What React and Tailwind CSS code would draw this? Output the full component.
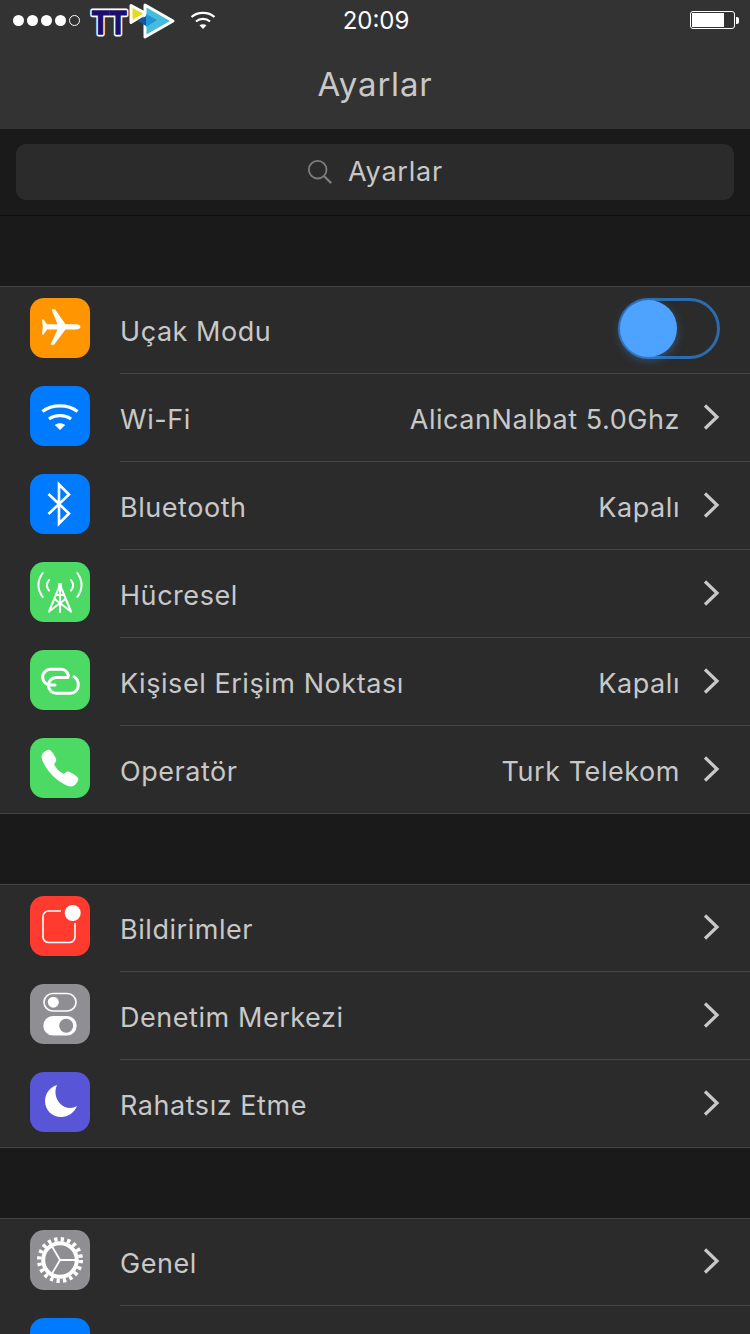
import React from "react";
import { IoCall } from "react-icons/io5";

const Chevron = () => (
  <svg width="18" height="28" viewBox="0 0 18 28" className="shrink-0 mt-[-1px]" fill="none">
    <path d="M3 2.5 L15 14 L3 25.5" stroke="#c8c8c8" strokeWidth="3.2" />
  </svg>
);

const Glyph = ({ children }) => (
  <svg width="60" height="60" viewBox="0 0 60 60" fill="none" stroke="none">
    {children}
  </svg>
);

const PlaneIcon = () => (
  <Glyph>
    <path fill="#fff" d="M50.5 28.8C50.5 27.2 48.5 26.2 46 26.2H35.5L25 11.2H21.5L27.5 26.2H17L13.5 21.5H12L12.8 28.8L12 36.5H13.5L17 31.5H27.5L20.5 46.7H24L35.5 31.5H46C48.5 31.5 50.5 30.4 50.5 28.8Z" />
  </Glyph>
);

const WifiIcon = () => (
  <Glyph>
    <path d="M12.5 25.5C22 18 38 18 47.5 25.5" stroke="#fff" strokeWidth="3.4" />
    <path d="M19 33C25 28.5 35 28.5 41 33" stroke="#fff" strokeWidth="3.4" />
    <path fill="#fff" d="M30 44L24.8 39C28 36.8 32 36.8 35.2 39Z" />
  </Glyph>
);

const BluetoothIcon = () => (
  <Glyph>
    <path d="M18.5 20L39 39.5L29 49.5V10.5L39 20.5L18.5 40" stroke="#fff" strokeWidth="2.6" />
  </Glyph>
);

const TowerIcon = () => (
  <Glyph>
    <g stroke="#fff" strokeWidth="2" strokeLinecap="round">
      <path d="M30 23V50" />
      <path d="M30 23L19 49.5M30 23L41 49.5" />
      <path d="M19 49.5L35.5 37M41 49.5L24.5 37" />
      <path d="M26 33L34 33" />
      <path d="M12.7 11C7 19 7 27 12.7 35M47.3 11C53 19 53 27 47.3 35" />
      <path d="M19 18C16 22 16 25 19 28.5M41 18C44 22 44 25 41 28.5" />
    </g>
    <circle cx="30" cy="23" r="2.2" fill="#fff" />
  </Glyph>
);

const HotspotIcon = () => (
  <Glyph>
    <g stroke="#fff" strokeWidth="3" strokeLinecap="round">
      <path d="M38.5 25.5C37 21.5 34.5 19.3 31 19.3H20.5A7.8 7.8 0 0 0 20.5 35H25" />
      <path d="M38 27.5H26A7.9 7.9 0 0 0 26.7 43.3H40A8 8 0 0 0 48.3 35C48.3 31 46.5 28.2 44 26.8" />
    </g>
  </Glyph>
);

const NoticeIcon = () => (
  <Glyph>
    <path d="M31 15H18.5A5.5 5.5 0 0 0 13 20.5V41A5.5 5.5 0 0 0 18.5 46.5H39.5A5.5 5.5 0 0 0 45 41V27" stroke="#fff" strokeWidth="1.6" />
    <circle cx="42.7" cy="17" r="8" fill="#fff" />
  </Glyph>
);

const ControlIcon = () => (
  <Glyph>
    <rect x="14" y="9.5" width="32" height="17.5" rx="8.75" stroke="#fff" strokeWidth="1.6" />
    <circle cx="23.3" cy="18.2" r="5.5" fill="#fff" />
    <rect x="13.3" y="32" width="33.4" height="19.6" rx="9.8" fill="#fff" />
    <circle cx="36.2" cy="41.8" r="7" fill="#8e8e93" />
  </Glyph>
);

const MoonIcon = () => (
  <Glyph>
    <path fill="#fff" d="M27 13C19.5 15.5 15 22 15 29C15 38 22 45 31 45C38 45 44 41 47 34C42 37 35 36.5 30.5 32C25.5 27 24 19.5 27 13Z" />
  </Glyph>
);

const GearIcon = () => (
  <Glyph>
    <circle cx="30" cy="30" r="20.8" stroke="#fff" strokeWidth="4.4" strokeDasharray="3.3 3.24" />
    <circle cx="30" cy="30" r="16.8" stroke="#fff" strokeWidth="4" />
    <path d="M30 30H47M30 30L21.5 15.5M30 30L21.5 44.5" stroke="#fff" strokeWidth="1.8" />
  </Glyph>
);

const Toggle = () => (
  <div className="flex items-center w-[102px] h-[61px] mt-[-3px] rounded-full border-[3px] border-[#2b6cb0]">
    <div className="w-[57px] h-[57px] ml-[-1px] rounded-full bg-[#4da3ff] shadow-[0_3px_10px_rgba(77,163,255,0.35)]" />
  </div>
);

const Row = ({ bg, icon, label, value, toggle, last }) => (
  <div className={`flex h-[88px] pl-[30px] ${last ? "border-b border-[#444444]" : ""}`}>
    <div className={`w-[60px] h-[60px] mt-3 rounded-[14px] shrink-0 ${bg}`}>{icon}</div>
    <div className={`flex flex-1 items-center ml-[30px] pr-[30px] ${last ? "" : "border-b border-[#444444]"}`}>
      <span className="flex-1 pt-[6px] text-[#c8c8c8]">{label}</span>
      {value && <span className="mr-[22px] pt-[6px] text-[#c8c8c8]">{value}</span>}
      {toggle ? <Toggle /> : <Chevron />}
    </div>
  </div>
);

// top hairline is an inset shadow so rows keep their 88px pitch
const Section = ({ children }) => (
  <div className="bg-[#2b2b2b] shadow-[inset_0_1px_0_#444444]">{children}</div>
);

const Gap = () => <div className="h-[70px]" />;

const CarrierLogo = () => (
  <svg width="90" height="42" viewBox="0 0 90 42" className="ml-[8px] shrink-0">
    <text x="4" y="35" fontFamily="'Liberation Sans', sans-serif" fontWeight="700" fontSize="33" fill="#1c0f6b" stroke="#fff" strokeWidth="5" strokeLinejoin="round" textLength="35" lengthAdjust="spacingAndGlyphs">TT</text>
    <text x="4" y="35" fontFamily="'Liberation Sans', sans-serif" fontWeight="700" fontSize="33" fill="#1c0f6b" stroke="#1c0f6b" strokeWidth="1.5" textLength="35" lengthAdjust="spacingAndGlyphs">TT</text>
    <path d="M43 6.5L58 14.5L43 23.5Z" fill="#e6dc1a" stroke="#fff" strokeWidth="3" strokeLinejoin="round" />
    <path d="M57 6L85 22L57 38Z" fill="#45bcdc" stroke="#fff" strokeWidth="3" strokeLinejoin="round" />
    <path d="M50 22L58 17V27Z" fill="#0d5aa0" />
    <path d="M58 15L69 21L58 28Z" fill="#1e96d8" />
  </svg>
);

const StatusBar = () => (
  <div className="flex items-center h-[40px] pl-[13px] pr-[11px]">
    <div className="flex flex-1 items-center">
      <div className="flex gap-[3px] shrink-0">
        <span className="w-[11px] h-[11px] rounded-full bg-white" />
        <span className="w-[11px] h-[11px] rounded-full bg-white" />
        <span className="w-[11px] h-[11px] rounded-full bg-white" />
        <span className="w-[11px] h-[11px] rounded-full bg-white" />
        <span className="w-[11px] h-[11px] rounded-full border border-white" />
      </div>
      <CarrierLogo />
      <svg width="26" height="20" viewBox="0 0 26 20" className="ml-[12px] shrink-0" fill="none">
        <path d="M1.5 7C7.5 1.5 18.5 1.5 24.5 7" stroke="#fff" strokeWidth="2.2" />
        <path d="M6 11.5C10 8 16 8 20 11.5" stroke="#fff" strokeWidth="2.2" />
        <path d="M13 19L9.5 15.2C11.5 13.8 14.5 13.8 16.5 15.2Z" fill="#fff" />
      </svg>
    </div>
    <span className="pt-[2px] text-[24px] leading-none tracking-normal text-white">20:09</span>
    <div className="flex flex-1 items-center justify-end">
      <div className="flex items-center w-[45px] h-[18px] rounded-[3px] border border-white p-[1px]">
        <div className="w-[32px] h-full bg-white" />
      </div>
      <div className="w-[3px] h-[7px] ml-[1px] rounded-r-[2px] bg-white" />
    </div>
  </div>
);

export default function App() {
  return (
    <div className="w-[750px] h-[1334px] overflow-hidden bg-[#1a1a1a] text-[27px] tracking-[0.55px] font-['Inter',sans-serif]">
      <div className="h-[129px] bg-[#333333]">
        <StatusBar />
        <div className="flex justify-center pt-[23px] text-[33px] leading-[42px] tracking-[0.8px] text-[#c8c8c8]">Ayarlar</div>
      </div>

      <div className="h-[87px] px-4 pt-[15px] border-b border-[#0c0c0c]">
        <div className="flex items-center justify-center gap-[15px] h-[56px] rounded-[10px] bg-[#2b2b2b]">
          <svg width="26" height="26" viewBox="0 0 28 28" fill="none">
            <circle cx="11.5" cy="11.5" r="9.5" stroke="#7d7d7d" strokeWidth="2" />
            <path d="M18.5 18.5L26 26" stroke="#7d7d7d" strokeWidth="2.4" />
          </svg>
          <span className="tracking-[0.8px] text-[#c8c8c8]">Ayarlar</span>
        </div>
      </div>

      <Gap />
      <Section>
        <Row bg="bg-[#ff9500]" icon={<PlaneIcon />} label="Uçak Modu" toggle />
        <Row bg="bg-[#007aff]" icon={<WifiIcon />} label="Wi-Fi" value="AlicanNalbat 5.0Ghz" />
        <Row bg="bg-[#007aff]" icon={<BluetoothIcon />} label="Bluetooth" value="Kapalı" />
        <Row bg="bg-[#4cd964]" icon={<TowerIcon />} label="Hücresel" />
        <Row bg="bg-[#4cd964]" icon={<HotspotIcon />} label="Kişisel Erişim Noktası" value="Kapalı" />
        <Row
          bg="bg-[#4cd964]"
          icon={<div className="flex h-full items-center justify-center text-white"><IoCall size={42} /></div>}
          label="Operatör"
          value="Turk Telekom"
          last
        />
      </Section>

      <Gap />
      <Section>
        <Row bg="bg-[#ff3b30]" icon={<NoticeIcon />} label="Bildirimler" />
        <Row bg="bg-[#8e8e93]" icon={<ControlIcon />} label="Denetim Merkezi" />
        <Row bg="bg-[#5856d6]" icon={<MoonIcon />} label="Rahatsız Etme" last />
      </Section>

      <Gap />
      <Section>
        <Row bg="bg-[#8e8e93]" icon={<GearIcon />} label="Genel" />
        <Row bg="bg-[#007aff]" label="" />
      </Section>
    </div>
  );
}
